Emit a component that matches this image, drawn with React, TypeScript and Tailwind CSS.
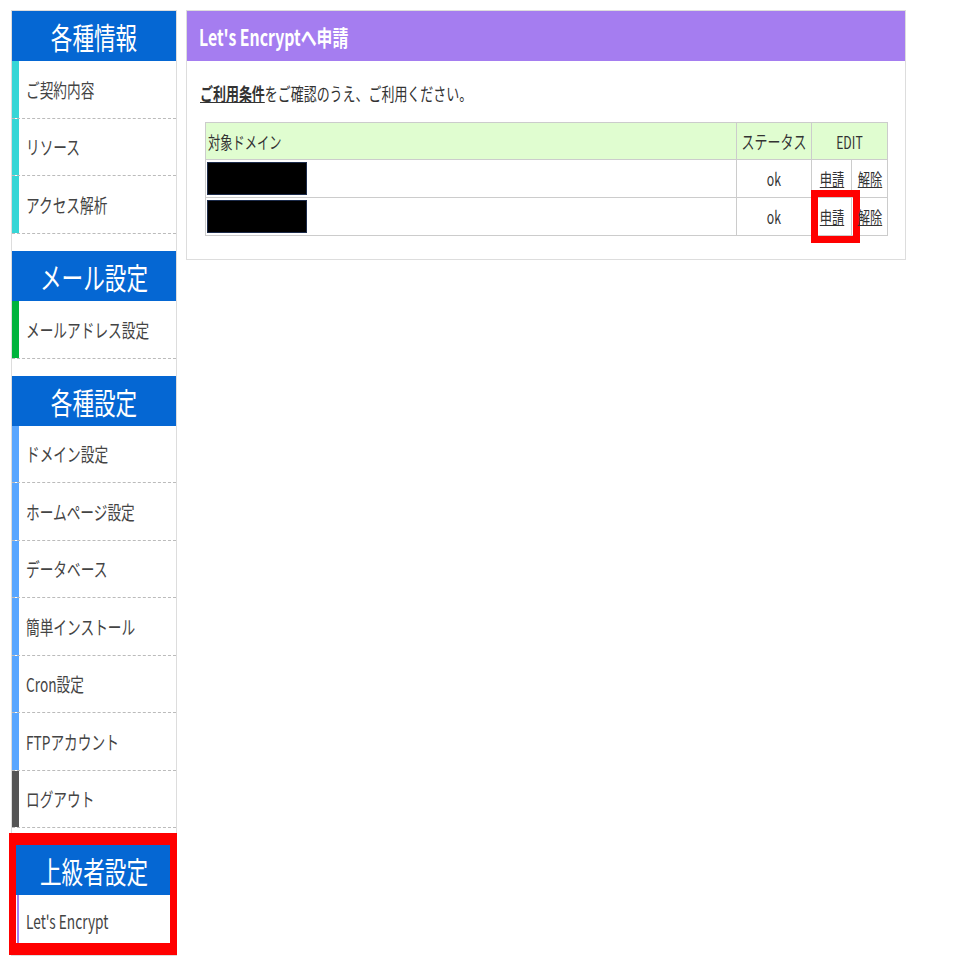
import React from "react";

const FONT = { fontFamily: '"Noto Sans CJK JP", "Noto Sans", sans-serif' };

function Cond({
  children,
  center = false,
  underline = false,
}: {
  children: React.ReactNode;
  center?: boolean;
  underline?: boolean;
}) {
  const base = center
    ? "inline-block origin-center scale-x-[0.72] whitespace-nowrap"
    : "inline-block origin-left scale-x-[0.72] whitespace-nowrap";
  return <span className={underline ? `${base} underline` : base}>{children}</span>;
}

function Centered({ children }: { children: React.ReactNode }) {
  return <div className="flex justify-center">{children}</div>;
}

function Header({ label }: { label: string }) {
  return (
    <div className="h-[50px] bg-[#0567d3] flex items-center justify-center text-white text-[30px] leading-none">
      <Cond center>{label}</Cond>
    </div>
  );
}

function Item({ label, accent }: { label: string; accent: string }) {
  return (
    <div className="h-[57.5px] flex border-b border-dashed border-[#bbb]">
      <div className={`w-[7px] shrink-0 ${accent}`} />
      <div className="flex items-center pl-[7px] text-[19px] text-[#444] leading-none">
        <Cond>{label}</Cond>
      </div>
    </div>
  );
}

export default function App() {
  return (
    <div className="w-[956px] h-[956px] bg-white overflow-hidden flex items-start" style={FONT}>
      {/* Sidebar */}
      <div className="ml-[11px] mt-[10px] w-[166px] border border-[#ddd] flex flex-col">
        <Header label="各種情報" />
        <Item label="ご契約内容" accent="bg-[#36d6d6]" />
        <Item label="リソース" accent="bg-[#36d6d6]" />
        <Item label="アクセス解析" accent="bg-[#36d6d6]" />
        <div className="h-[17.5px]" />
        <Header label="メール設定" />
        <Item label="メールアドレス設定" accent="bg-[#00b43c]" />
        <div className="h-[17px]" />
        <Header label="各種設定" />
        <Item label="ドメイン設定" accent="bg-[#58a6ff]" />
        <Item label="ホームページ設定" accent="bg-[#58a6ff]" />
        <Item label="データベース" accent="bg-[#58a6ff]" />
        <Item label="簡単インストール" accent="bg-[#58a6ff]" />
        <Item label="Cron設定" accent="bg-[#58a6ff]" />
        <Item label="FTPアカウント" accent="bg-[#58a6ff]" />
        <Item label="ログアウト" accent="bg-[#555555]" />
        <div className="h-[17px]" />
        <div className="relative">
          <Header label="上級者設定" />
          <div className="h-[50px] flex">
            <div className="w-[7px] shrink-0 flex">
              <div className="ml-auto w-[2px] bg-[#a57df0]" />
            </div>
            <div className="flex items-center pl-[7px] text-[19px] text-[#444] leading-none">
              <Cond>Let's Encrypt</Cond>
            </div>
          </div>
          <div className="absolute left-[-3px] top-[-12px] w-[168px] h-[122px] border-x-[7px] border-y-[12px] border-[#ff0000] pointer-events-none" />
        </div>
        <div className="h-[10px]" />
      </div>

      {/* Main panel */}
      <div className="ml-[9px] mt-[10px] w-[720px] border border-[#ddd] bg-white">
        <div className="h-[50px] bg-[#a57df0] flex items-center pl-[12px] text-white text-[22px] font-bold leading-none">
          <Cond>Let's Encryptへ申請</Cond>
        </div>
        <div className="pt-[20px] pb-[23px]">
          <div className="pl-[13px] h-[24px] flex items-center text-[18px] text-[#333] leading-none">
            <Cond>
              <span className="underline font-bold">ご利用条件</span>をご確認のうえ、ご利用ください。
            </Cond>
          </div>
          <table className="mt-[17px] ml-[18px] w-[682px] table-fixed border-collapse text-[17px] text-[#333] leading-none">
            <colgroup>
              <col className="w-[531px]" />
              <col className="w-[75px]" />
              <col className="w-[40px]" />
              <col className="w-[36px]" />
            </colgroup>
            <tbody>
              <tr className="h-[37px] bg-[#e0fdd0]">
                <td className="border border-[#ccc] pl-[2px] align-middle">
                  <Cond>対象ドメイン</Cond>
                </td>
                <td className="border border-[#ccc] p-0 align-middle text-[18px]">
                  <Centered>
                    <Cond center>ステータス</Cond>
                  </Centered>
                </td>
                <td colSpan={2} className="border border-[#ccc] p-0 align-middle">
                  <Centered>
                    <Cond center>EDIT</Cond>
                  </Centered>
                </td>
              </tr>
              {[0, 1].map((i) => (
                <tr key={i} className="h-[38px]">
                  <td className="border border-[#ccc] p-0 align-middle">
                    <div className="ml-[1px] w-[100px] h-[33px] bg-black border border-[#1c2b4a]" />
                  </td>
                  <td className="border border-[#ccc] p-0 align-middle">
                    <Centered>
                      <Cond center>ok</Cond>
                    </Centered>
                  </td>
                  <td className="border border-[#ccc] p-0 align-middle relative">
                    <Centered>
                      <Cond center underline>
                        申請
                      </Cond>
                    </Centered>
                    {i === 1 && (
                      <div className="absolute left-[-1px] top-[-8px] w-[49px] h-[53px] border-[7px] border-[#ff0000] pointer-events-none" />
                    )}
                  </td>
                  <td className="border border-[#ccc] p-0 align-middle">
                    <Centered>
                      <Cond center underline>
                        解除
                      </Cond>
                    </Centered>
                  </td>
                </tr>
              ))}
            </tbody>
          </table>
        </div>
      </div>
    </div>
  );
}
